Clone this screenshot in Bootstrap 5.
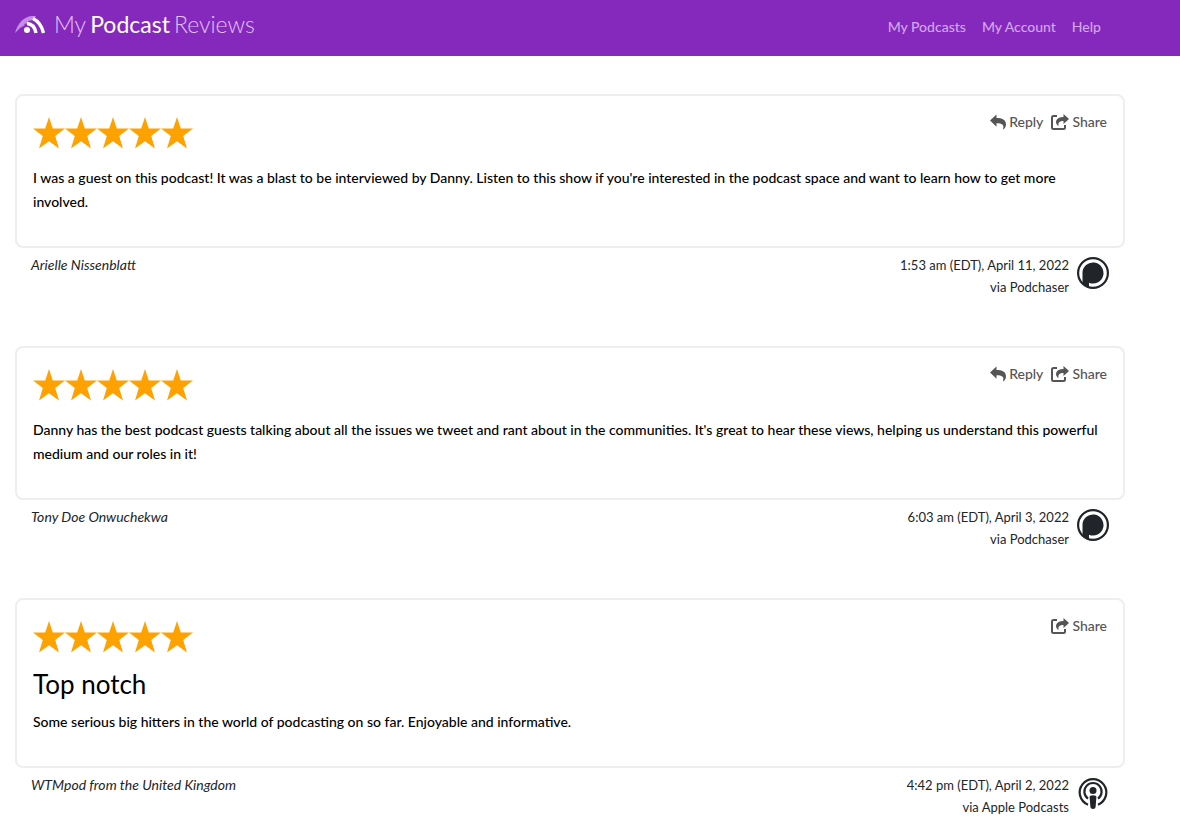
<!DOCTYPE html>
<html lang="en">
<head>
<meta charset="utf-8">
<meta name="viewport" content="width=device-width, initial-scale=1">
<title>My Podcast Reviews</title>
<link rel="stylesheet" href="https://cdn.jsdelivr.net/npm/bootstrap@5.3.0/dist/css/bootstrap.min.css">
<style>
body{font-family:Lato,"Liberation Sans",sans-serif;font-size:14px;line-height:24px;color:#212529;background:#fff}
.page-width{max-width:1140px;padding:0 15px}
.topbar{background:#8529bd;min-height:56px}
.brand-name{font-size:23px;line-height:32px;font-weight:300;color:#e2c0f5}
.brand-name strong{font-weight:400;color:#fff}
.menu-link{color:#d3a6ed;font-weight:500;text-decoration:none;padding:0 8px}
.main-menu{padding:15px 16px 0 0}
.review-list{padding-top:38px}
.review{margin-bottom:48px}
.review-box{border:2px solid #eee;border-radius:8px;padding:16px;color:#000;font-weight:500}
.stars{height:54px;padding-top:5px}
.stars svg{display:block}
.review-title{font-size:26px;line-height:28px;margin:0 0 12px;font-weight:400}
.action{display:flex;align-items:center;gap:3px;border:0;background:none;padding:0;color:#555;font-weight:500;line-height:20px}
.review-meta{font-size:13px;line-height:22px;padding:6px 16px 0}
.author{font-size:14px}
.source-icon{margin-top:3px}
</style>
</head>
<body>
<svg class="d-none" aria-hidden="true">
<defs>
<symbol id="five" viewBox="0 0 160 32"><g fill="#ffa200"><path id="st" d="M16 0l3.800 11.600H32L22.200 19l3.800 12.400-10-7.200-10 7.200L9.800 19 0 11.600h12.200z"/><use href="#st" x="32"/><use href="#st" x="64"/><use href="#st" x="96"/><use href="#st" x="128"/></g></symbol>
<symbol id="reply" viewBox="0 0 16 16"><path fill="currentColor" d="M0 6.500 6.500.500V4C12 4 16 5.500 16 10.500c0 1.900-.8 3.500-2.300 4.700-.4.300-.8 0-.6-.5C14.300 10.500 12 9.200 6.500 9.200v3.500z"/></symbol>
<symbol id="share" viewBox="0 0 18 16"><path fill="none" stroke="currentColor" stroke-width="2" d="M6 2H2.500Q1 2 1 3.500v10Q1 15 2.500 15h10q1.500 0 1.500-1.500V11"/><path fill="currentColor" d="M12.500 0 18 5l-5.500 5V7C8.500 7 6.800 8.500 7.600 12.300 3 9 4.500 3 12.500 3z"/></symbol>
<symbol id="podchaser" viewBox="0 0 32 32"><circle cx="16" cy="16" r="14.900" fill="none" stroke="currentColor" stroke-width="2.200"/><path fill="currentColor" d="M5.500 27V16A10.500 10.500 0 1 1 12 25.700V30z"/></symbol>
<symbol id="apple" viewBox="0 0 32 32"><g fill="none" stroke="currentColor" stroke-width="2.200"><path d="M11 27.700a13.300 13.300 0 1 1 10 0M11 21.600a8.600 8.600 0 1 1 10 0"/></g><circle cx="16" cy="13.500" r="3.500" fill="currentColor"/><path fill="currentColor" d="M12.600 20q0-1.800 3.400-1.800t3.400 1.800l-.8 10q-.2 2-2.600 2t-2.600-2z"/></symbol>
</defs>
</svg>
<header class="topbar">
<div class="page-width d-flex justify-content-between">
<a href="#" class="d-flex text-decoration-none pt-2" aria-label="My Podcast Reviews">
<svg class="mt-2 me-2" width="31" height="18" viewBox="0 0 31 18"><path d="M0 17C3 6 10-1 21 0l-3 4-5 1 1 2-5 1 1 1-5 3z" fill="#c48de4"/><circle cx="12" cy="14" r="3" fill="#fff"/><path d="M12 7.500q7.500.5 9 9.500M18 2.500q8 4 10.500 14.500" stroke="#fff" stroke-width="3.400" fill="none"/></svg>
<span class="brand-name d-flex gap-1"><span>My</span><strong>Podcast</strong><span>Reviews</span></span></a>
<nav class="main-menu d-flex" aria-label="Main"><a class="menu-link" href="#">My Podcasts</a><a class="menu-link" href="#">My Account</a><a class="menu-link" href="#">Help</a></nav>
</div>
</header>
<main class="page-width review-list">
<article class="review">
<div class="review-box"><div class="d-flex justify-content-between align-items-start">
<div class="stars" role="img" aria-label="5 stars"><svg width="160" height="32"><use href="#five"/></svg></div>
<div class="d-flex gap-2"><button class="action" type="button"><svg width="16" height="16"><use href="#reply"/></svg>Reply</button><button class="action" type="button"><svg width="18" height="16"><use href="#share"/></svg>Share</button></div></div>
<p>I was a guest on this podcast! It was a blast to be interviewed by Danny. Listen to this show if you're interested in the podcast space and want to learn how to get more involved.</p></div>
<footer class="review-meta d-flex justify-content-between"><em class="author">Arielle Nissenblatt</em><div class="d-flex gap-2 text-end"><div>1:53 am (EDT), April 11, 2022<br>via Podchaser</div><svg class="source-icon" width="32" height="32"><use href="#podchaser"/></svg></div></footer>
</article>
<article class="review">
<div class="review-box"><div class="d-flex justify-content-between align-items-start">
<div class="stars" role="img" aria-label="5 stars"><svg width="160" height="32"><use href="#five"/></svg></div>
<div class="d-flex gap-2"><button class="action" type="button"><svg width="16" height="16"><use href="#reply"/></svg>Reply</button><button class="action" type="button"><svg width="18" height="16"><use href="#share"/></svg>Share</button></div></div>
<p>Danny has the best podcast guests talking about all the issues we tweet and rant about in the communities. It's great to hear these views, helping us understand this powerful medium and our roles in it!</p></div>
<footer class="review-meta d-flex justify-content-between"><em class="author">Tony Doe Onwuchekwa</em><div class="d-flex gap-2 text-end"><div>6:03 am (EDT), April 3, 2022<br>via Podchaser</div><svg class="source-icon" width="32" height="32"><use href="#podchaser"/></svg></div></footer>
</article>
<article>
<div class="review-box"><div class="d-flex justify-content-between align-items-start">
<div class="stars" role="img" aria-label="5 stars"><svg width="160" height="32"><use href="#five"/></svg></div>
<button class="action" type="button"><svg width="18" height="16"><use href="#share"/></svg>Share</button></div>
<h2 class="review-title">Top notch</h2>
<p>Some serious big hitters in the world of podcasting on so far. Enjoyable and informative.</p></div>
<footer class="review-meta d-flex justify-content-between"><em class="author">WTMpod from the United Kingdom</em><div class="d-flex gap-2 text-end"><div>4:42 pm (EDT), April 2, 2022<br>via Apple Podcasts</div><svg class="source-icon" width="32" height="32"><use href="#apple"/></svg></div></footer>
</article>
</main>
<script src="https://cdn.jsdelivr.net/npm/bootstrap@5.3.0/dist/js/bootstrap.bundle.min.js"></script>
</body>
</html>
